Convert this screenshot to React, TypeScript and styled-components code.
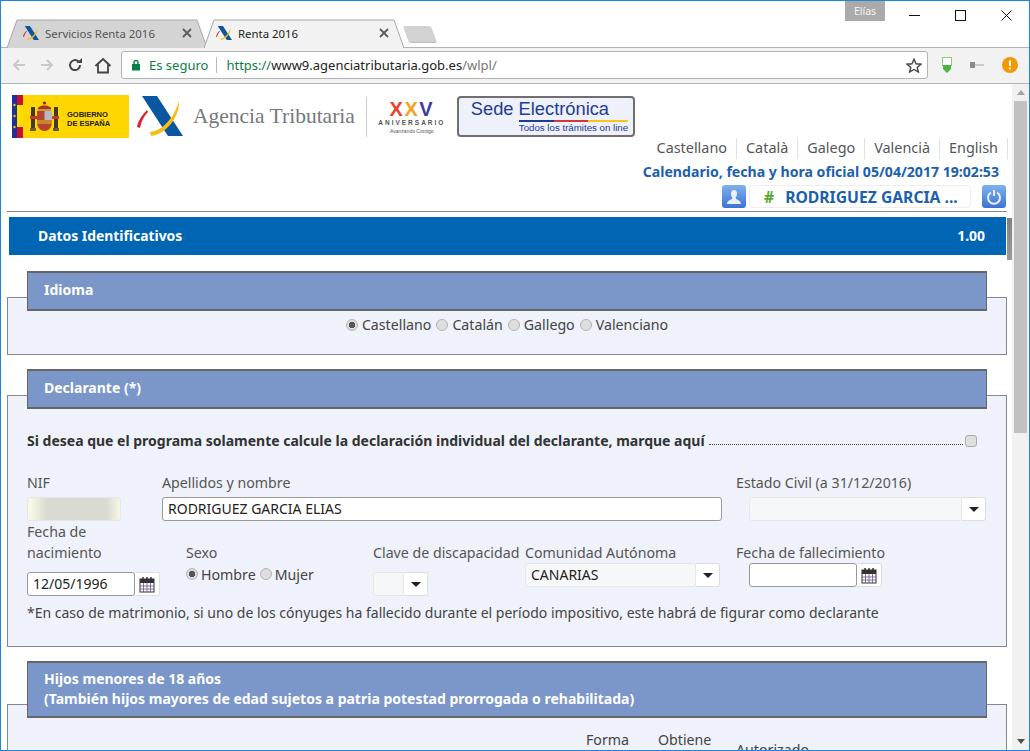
import React from 'react';
import styled, { createGlobalStyle } from 'styled-components';

const GlobalStyle = createGlobalStyle`
  html, body { margin: 0; padding: 0; background: #fff; }
  * { box-sizing: border-box; }
  body { font-family: "Noto Sans", "Open Sans", sans-serif; }
`;

const Win = styled.div`
  width: 1030px;
  height: 751px;
  border: 1px solid #1d87d6;
  display: flex;
  flex-direction: column;
  overflow: hidden;
  background: #fff;
`;

const TitleBar = styled.div`
  height: 47px;
  flex: none;
  display: flex;
  align-items: flex-end;
  padding-left: 6px;
  position: relative;
  border-bottom: 1px solid #b4b4b4;
`;

const Tab = styled.div<{ $active?: boolean }>`
  position: relative;
  width: 200px;
  height: 29px;
  margin-right: -3px;
  margin-bottom: -1px;
  display: flex;
  align-items: center;
  padding: 0 15px 1px ${(p) => (p.$active ? 12 : 16)}px;
  font-size: 11.4px;
  color: ${(p) => (p.$active ? '#222' : '#555')};
  z-index: ${(p) => (p.$active ? 2 : 1)};
  svg.shape { position: absolute; inset: 0; z-index: -1; }
`;

const TabLabel = styled.span`
  flex: 1;
  margin-left: 6px;
  white-space: nowrap;
`;

const NewTab = styled.div`
  width: 28px;
  height: 17px;
  margin: 0 0 4px 5px;
  background: #d2d2d2;
  border-bottom: 1px solid #bdbdbd;
  border-radius: 2px;
  transform: skewX(20deg);
`;

const Profile = styled.div`
  position: absolute;
  top: 0;
  left: 844px;
  width: 40px;
  height: 20px;
  background: #aaa;
  color: #f4f4f4;
  font-size: 10.5px;
  text-align: center;
  line-height: 20px;
`;

const WinControls = styled.div`
  position: absolute;
  top: 0;
  right: 0;
  display: flex;
`;

const WinBtn = styled.div`
  width: 46px;
  height: 29px;
  display: flex;
  align-items: center;
  justify-content: center;
`;

const Toolbar = styled.div`
  height: 36px;
  flex: none;
  background: #f2f2f2;
  border-bottom: 1px solid #b4b4b4;
  display: flex;
  align-items: center;
  padding: 0 0 1px 4px;
`;

const NavBtn = styled.div`
  width: 28px;
  height: 24px;
  display: flex;
  align-items: center;
  justify-content: center;
`;

const Omnibox = styled.div`
  width: 807px;
  height: 28px;
  margin-left: 4px;
  background: #fff;
  border: 1px solid #b4b4b4;
  border-radius: 3px;
  display: flex;
  align-items: center;
  padding: 0 5px 0 9px;
  font-size: 13px;
`;

const Secure = styled.span`
  color: #0b8043;
  margin-left: 8px;
`;

const OmniSep = styled.span`
  width: 1px;
  height: 16px;
  background: #bbb;
  margin: 0 9px 0 8px;
`;

const Url = styled.span`
  flex: 1;
  color: #0b8043;
  b { font-weight: 400; color: #222; }
  i { font-style: normal; color: #777; }
`;

const ExtIcons = styled.div`
  display: flex;
  align-items: center;
  margin-left: 14px;
  gap: 18px;
`;

const Viewport = styled.div`
  flex: 1;
  display: flex;
  min-height: 0;
`;

const Page = styled.div`
  flex: 1;
  min-width: 0;
  overflow: hidden;
  padding: 11px 0 0 6px;
  color: #444;
  font-size: 14.2px;
`;

const Scrollbar = styled.div`
  width: 17px;
  flex: none;
  background: #f1f1f1;
  display: flex;
  flex-direction: column;
  align-items: center;
`;

const ScrollArrow = styled.div<{ $down?: boolean }>`
  height: 17px;
  flex: none;
  display: flex;
  align-items: center;
  justify-content: center;
  &::before {
    content: '';
    border-left: 4px solid transparent;
    border-right: 4px solid transparent;
    ${(p) => (p.$down ? 'border-top: 5px solid #505050;' : 'border-bottom: 5px solid #a3a3a3;')}
  }
`;

const ScrollThumb = styled.div`
  width: 13px;
  height: 332px;
  background: #c1c1c1;
`;

const ScrollRest = styled.div`
  flex: 1;
`;

const LogoRow = styled.div`
  height: 43px;
  display: flex;
  align-items: center;
`;

const GovLogo = styled.div`
  width: 117px;
  height: 43px;
  margin-left: 5px;
  background: #ffd600;
  display: flex;
  align-items: center;
  color: #222;
  font-size: 7.5px;
  line-height: 9px;
  font-weight: 700;
  font-family: "Liberation Sans", sans-serif;
  white-space: nowrap;
`;

const GovText = styled.span`
  margin-left: 8px;
  padding-top: 4px;
`;

const CrestBox = styled.div`
  margin-left: 7px;
  display: flex;
`;

const BrandMark = styled.div`
  margin: 0 10px 0 8px;
  display: flex;
`;

const BrandName = styled.span`
  font-family: "Liberation Serif", serif;
  font-size: 21.5px;
  color: #77787b;
  white-space: nowrap;
`;

const LogoSep = styled.span`
  width: 1px;
  height: 40px;
  background: #ccc;
  margin: 0 10px 0 11px;
`;

const Anniversary = styled.div`
  width: 70px;
  display: flex;
  flex-direction: column;
  align-items: center;
  font-family: "Liberation Sans", sans-serif;
  color: #555;
  line-height: 1;
`;

const Xxv = styled.div`
  font-size: 20px;
  font-weight: 700;
  letter-spacing: 1.5px;
  height: 19px;
  span:nth-child(1) { color: #e8412c; }
  span:nth-child(2) { color: #f4a21d; }
  span:nth-child(3) { color: #3b3f9e; }
`;

const AnnTitle = styled.div`
  font-size: 6.5px;
  font-weight: 700;
  letter-spacing: 2px;
  margin-top: 2px;
  white-space: nowrap;
`;

const AnnSub = styled.div`
  font-size: 5px;
  margin-top: 2px;
  white-space: nowrap;
`;

const SedeBox = styled.div`
  width: 178px;
  height: 41px;
  margin-left: 10px;
  border: 2px solid #6f6f6f;
  border-radius: 4px;
  background: #eef0fa;
  display: flex;
  flex-direction: column;
  padding: 1px 0 0 12px;
  font-family: "Liberation Sans", sans-serif;
  color: #1f3c94;
`;

const SedeTitle = styled.div`
  font-size: 18.3px;
  line-height: 20px;
  white-space: nowrap;
`;

const SedeBar = styled.div`
  width: 109px;
  height: 2px;
  flex: none;
  margin: 1px 0 0 48px;
  background: linear-gradient(90deg, #1f3c94 0 32%, #d8363a 32% 63%, #f7c61d 63%);
`;

const SedeSub = styled.div`
  font-size: 9.7px;
  line-height: 12px;
  margin-left: 48px;
  white-space: nowrap;
`;

const LangRow = styled.div`
  display: flex;
  justify-content: flex-end;
  height: 21px;
  margin-right: 4px;
`;

const LangItem = styled.div`
  padding: 0 9px;
  border-right: 1px solid #e2e2e2;
  color: #555;
  font-size: 14.4px;
  line-height: 20px;
  white-space: nowrap;
`;

const OfficialDate = styled.div`
  text-align: right;
  color: #1c5fad;
  font-weight: 700;
  font-size: 14.1px;
  line-height: 18px;
  margin: 4px 13px 0 0;
  white-space: nowrap;
`;

const UserRow = styled.div`
  display: flex;
  justify-content: flex-end;
  align-items: center;
  height: 23px;
  margin: 4px 6px 0 0;
`;

const SquareBtn = styled.div`
  width: 24px;
  height: 23px;
  border-radius: 3px;
  background: linear-gradient(#7fb2ec, #3d72d6);
  display: flex;
  align-items: center;
  justify-content: center;
`;

const UserBox = styled.div`
  width: 222px;
  height: 23px;
  margin: 0 11px 0 3px;
  border: 1px solid #eee;
  border-radius: 3px;
  display: flex;
  align-items: center;
  color: #1c5fad;
  font-weight: 700;
  font-size: 15.7px;
  padding-left: 14px;
  white-space: nowrap;
`;

const Hash = styled.span`
  color: #5aa82e;
  margin-right: 11px;
`;

const Rule = styled.div`
  height: 1px;
  background: #8a8a8a;
  margin: 3px 5px 0 0;
`;

const BlueBarRow = styled.div`
  display: flex;
  align-items: flex-start;
  height: 40px;
  padding-bottom: 2px;
  margin: 5px 0 0 2px;
`;

const BlueBar = styled.div`
  flex: 1;
  height: 38px;
  background: #0065b3;
  color: #fff;
  font-weight: 700;
  font-size: 13.9px;
  display: flex;
  align-items: center;
  justify-content: space-between;
  padding: 0 21px 2px 29px;
`;

const InnerThumb = styled.div`
  width: 5px;
  height: 42px;
  margin: 1px 0 0 1px;
  background: linear-gradient(#808080, #9a9a9a);
`;

/* la cabecera sobresale por arriba de su panel: el margen depende de su alto */
const Panel = styled.section<{ $height: number; $head: number }>`
  height: ${(p) => p.$height}px;
  margin: ${(p) => p.$head}px 5px 0 0;
  border: 1px solid #85878a;
  background: #eff2fa;
`;

const PanelHead = styled.header<{ $height: number }>`
  height: ${(p) => p.$height}px;
  margin: ${(p) => 13 - p.$height}px 19px 0 19px;
  padding: 0 16px 2px;
  background: #7b96c9;
  border-top: 2px solid #666;
  border-bottom: 2px solid #666;
  border-left: 1px solid #666;
  border-right: 1px solid #666;
  display: flex;
  flex-direction: column;
  justify-content: center;
  color: #fff;
  font-weight: 700;
  font-size: 14px;
  line-height: 20px;
  white-space: nowrap;
`;

const RadioGroup = styled.div<{ $center?: boolean }>`
  display: flex;
  align-items: center;
  gap: 4px;
  ${(p) => p.$center && 'justify-content: center; margin-top: 4px; gap: 5px;'}
  white-space: nowrap;
`;

const Radio = styled.span<{ $checked?: boolean }>`
  width: 12px;
  height: 12px;
  border-radius: 50%;
  margin-right: -1px;
  border: 1px solid #b5b5b5;
  background: ${(p) => (p.$checked ? 'radial-gradient(circle, #555 0 3px, #ddd 3.5px)' : '#dedede')};
`;

const CheckLine = styled.div`
  display: flex;
  align-items: center;
  margin: 22px 29px 0 19px;
  color: #333;
  font-weight: 700;
  font-size: 14px;
  white-space: nowrap;
`;

const Dots = styled.span`
  flex: 1;
  height: 8px;
  margin: 0 2px 0 4px;
  border-bottom: 1px dotted #444;
`;

const Checkbox = styled.span`
  width: 12px;
  height: 12px;
  flex: none;
  border: 1px solid #aaa;
  border-radius: 3px;
  background: #dfdfdf;
`;

const FormRow = styled.div<{ $top: number }>`
  display: flex;
  align-items: flex-start;
  margin: ${(p) => p.$top}px 0 0 19px;
`;

const Field = styled.div<{ $width: number; $top?: number }>`
  width: ${(p) => p.$width}px;
  flex: none;
  padding-top: ${(p) => p.$top ?? 0}px;
`;

const Label = styled.div<{ $gap?: number; $wrap?: boolean }>`
  color: #555;
  font-size: 14.2px;
  line-height: 21px;
  margin-bottom: ${(p) => p.$gap ?? 4}px;
  white-space: ${(p) => (p.$wrap ? 'normal' : 'nowrap')};
  ${(p) => p.$wrap && 'width: 90px;'}
`;

const Input = styled.div<{ $width: number; $tone?: 'plain' | 'nif' | 'off' }>`
  width: ${(p) => p.$width}px;
  height: 24px;
  border: 1px solid ${(p) => (p.$tone && p.$tone !== 'plain' ? '#e4e6e8' : '#999')};
  border-radius: 3px;
  background: ${(p) =>
    p.$tone === 'nif'
      ? 'linear-gradient(90deg, #f8f8e6 0 4%, #d9dad2 20% 85%, #f8f8e6 100%)'
      : p.$tone === 'off'
        ? '#f6f7f8'
        : '#fff'};
  color: #222;
  font-size: 14px;
  line-height: 22px;
  padding-left: 5px;
  white-space: nowrap;
`;

const Combo = styled.div<{ $indent?: number }>`
  display: flex;
  margin-left: ${(p) => p.$indent ?? 0}px;
`;

const SexoRadios = styled(RadioGroup)`
  height: 18px;
  margin-top: -1px;
`;

const AddonBtn = styled.div`
  width: 24px;
  height: 24px;
  flex: none;
  background: #fff;
  border: 1px solid #dedede;
  border-left: 0;
  border-radius: 0 3px 3px 0;
  display: flex;
  align-items: center;
  justify-content: center;
`;

const CaretBtn = styled(AddonBtn)`
  &::before {
    content: '';
    border-left: 5px solid transparent;
    border-right: 5px solid transparent;
    border-top: 5px solid #222;
  }
`;

const CalendarBtn = styled(AddonBtn)`
  width: 25px;
`;

const Note = styled.div`
  margin: 7px 0 0 19px;
  color: #444;
  font-size: 14px;
  line-height: 20px;
  white-space: nowrap;
`;

const ChildColumns = styled.div`
  display: grid;
  grid-template-columns: 72px 78px auto;
  margin: 12px 0 0 578px;
  color: #444;
  line-height: 20px;
  white-space: nowrap;
`;

const LowColumn = styled.span`
  padding-top: 10px;
`;

const AeatLogo = ({ size }: { size: number }) => (
  <svg width={size} height={(size * 41) / 46} viewBox="0 0 46 41">
    <path d="M5 0H20L46 40H31Z" fill="#0a56a0" />
    <path d="M42 5C43 20 30 38 14 40L13 36C26 35 38 20 42 5Z" fill="#f6bd16" />
    <path d="M10 14C5 19 1 25 0 31L3 32C4 26 7 20 11 16Z" fill="#d8262c" />
  </svg>
);

const TabShape = ({ active }: { active?: boolean }) => (
  <svg className="shape" width="200" height="29" viewBox="0 0 200 29">
    <path
      d="M0 29L10 1H190L200 29"
      fill={active ? '#f2f2f2' : '#d4d4d4'}
      stroke="#a8a8a8"
    />
  </svg>
);

const Close = () => (
  <svg width="10" height="10" viewBox="0 0 10 10">
    <path d="M1 1L9 9M9 1L1 9" stroke="#5a5a5a" strokeWidth="1.8" />
  </svg>
);

const CalendarIcon = () => (
  <svg width="16" height="17" viewBox="0 0 16 17">
    <rect x="1" y="3" width="14" height="13" fill="#fff" stroke="#333" />
    <rect x="1" y="3" width="14" height="4" fill="#333" />
    <path d="M4 1V5M8 1V5M12 1V5" stroke="#333" strokeWidth="1.5" />
    <path d="M1 10H15M1 13H15M4.5 7V16M8 7V16M11.5 7V16" stroke="#6a4f8c" strokeWidth="0.8" />
  </svg>
);

const Crest = () => (
  <svg width="29" height="31" viewBox="0 0 29 31">
    <rect x="1" y="6" width="4" height="22" fill="#3d3a2c" />
    <rect x="24" y="6" width="4" height="22" fill="#3d3a2c" />
    <rect x="0" y="27" width="6" height="3" fill="#6b5a2a" />
    <rect x="23" y="27" width="6" height="3" fill="#6b5a2a" />
    <path d="M0 15H7V18H0ZM22 15H29V18H22Z" fill="#c8342a" />
    <path d="M7 10H22V21C22 27 18 30 14.5 30C11 30 7 27 7 21Z" fill="#b5432f" />
    <rect x="14.5" y="10" width="7.5" height="9" fill="#b9b6c8" />
    <rect x="7" y="19" width="15" height="4" fill="#c9862a" />
    <path d="M8 9C6 3 23 3 21 9Z" fill="#a83226" />
    <rect x="8" y="8" width="13" height="2" fill="#c99a2e" />
    <circle cx="14.5" cy="2" r="1.6" fill="#7d2a1f" />
  </svg>
);

const FlagStripes = () => (
  <svg width="11" height="43" viewBox="0 0 11 43">
    <rect width="5" height="43" fill="#1f2f96" />
    <circle cx="2.5" cy="10" r="1.2" fill="#e8c21a" />
    <circle cx="2.5" cy="21" r="1.2" fill="#e8c21a" />
    <circle cx="2.5" cy="32" r="1.2" fill="#e8c21a" />
    <rect x="5" width="6" height="43" fill="#c8102e" />
    <rect x="5" y="10" width="6" height="22" fill="#ffe000" />
  </svg>
);

export default function App() {
  return (
    <>
      <GlobalStyle />
      <Win>
        <TitleBar>
          <Tab>
            <TabShape />
            <AeatLogo size={16} />
            <TabLabel>Servicios Renta 2016</TabLabel>
            <Close />
          </Tab>
          <Tab $active>
            <TabShape active />
            <AeatLogo size={16} />
            <TabLabel>Renta 2016</TabLabel>
            <Close />
          </Tab>
          <NewTab />
          <Profile>Elías</Profile>
          <WinControls>
            <WinBtn>
              <svg width="11" height="11" viewBox="0 0 11 11"><path d="M0 5.5H11" stroke="#111" /></svg>
            </WinBtn>
            <WinBtn>
              <svg width="11" height="11" viewBox="0 0 11 11"><rect x=".5" y=".5" width="10" height="10" fill="none" stroke="#111" /></svg>
            </WinBtn>
            <WinBtn>
              <svg width="11" height="11" viewBox="0 0 11 11"><path d="M.5 .5L10.5 10.5M10.5 .5L.5 10.5" stroke="#111" /></svg>
            </WinBtn>
          </WinControls>
        </TitleBar>
        <Toolbar>
          <NavBtn>
            <svg width="16" height="16" viewBox="0 0 16 16"><path d="M14 8H3M8 3L3 8L8 13" fill="none" stroke="#c8c8c8" strokeWidth="2" /></svg>
          </NavBtn>
          <NavBtn>
            <svg width="16" height="16" viewBox="0 0 16 16"><path d="M2 8H13M8 3L13 8L8 13" fill="none" stroke="#c8c8c8" strokeWidth="2" /></svg>
          </NavBtn>
          <NavBtn>
            <svg width="16" height="16" viewBox="0 0 16 16"><path d="M13 8A5 5 0 1 1 11.5 4.5" fill="none" stroke="#444" strokeWidth="2" /><path d="M9.5 6H15V1Z" fill="#444" /></svg>
          </NavBtn>
          <NavBtn>
            <svg width="18" height="17" viewBox="0 0 18 17"><path d="M1.5 9L9 2L16.5 9M4 7.5V15.5H14V7.5" fill="none" stroke="#444" strokeWidth="1.8" /></svg>
          </NavBtn>
          <Omnibox>
            <svg width="10" height="12" viewBox="0 0 10 12"><rect x="1" y="5" width="8" height="6.5" fill="#0b8043" /><path d="M3 5V3.5A2 2 0 0 1 7 3.5V5" fill="none" stroke="#0b8043" strokeWidth="1.4" /></svg>
            <Secure>Es seguro</Secure>
            <OmniSep />
            <Url>https://<b>www9.agenciatributaria.gob.es</b><i>/wlpl/</i></Url>
            <svg width="16" height="15" viewBox="0 0 16 15"><path d="M8 1.2L10 5.8L15 6.2L11.2 9.4L12.4 14L8 11.5L3.6 14L4.8 9.4L1 6.2L6 5.8Z" fill="none" stroke="#444" strokeWidth="1.4" /></svg>
          </Omnibox>
          <ExtIcons>
            <svg width="10" height="17" viewBox="0 0 10 17"><rect x=".5" y=".5" width="9" height="8" fill="#fff" stroke="#8ec97c" /><path d="M1 8H9V12L5 16L1 12Z" fill="#4cb53f" /></svg>
            <svg width="14" height="6" viewBox="0 0 14 6"><rect width="5" height="6" fill="#8a8a8a" /><path d="M5 3H14" stroke="#a5a5a5" /></svg>
            <svg width="16" height="16" viewBox="0 0 16 16"><circle cx="8" cy="8" r="8" fill="#f29900" /><rect x="7" y="3.5" width="2" height="5.5" fill="#fff" /><rect x="7" y="10.5" width="2" height="2" fill="#fff" /></svg>
          </ExtIcons>
        </Toolbar>
        <Viewport>
          <Page>
            <LogoRow>
              <GovLogo>
                <FlagStripes />
                <CrestBox><Crest /></CrestBox>
                <GovText>GOBIERNO<br />DE ESPAÑA</GovText>
              </GovLogo>
              <BrandMark><AeatLogo size={46} /></BrandMark>
              <BrandName>Agencia Tributaria</BrandName>
              <LogoSep />
              <Anniversary>
                <Xxv><span>X</span><span>X</span><span>V</span></Xxv>
                <AnnTitle>ANIVERSARIO</AnnTitle>
                <AnnSub>Avanzando Contigo</AnnSub>
              </Anniversary>
              <SedeBox>
                <SedeTitle>Sede Electrónica</SedeTitle>
                <SedeBar />
                <SedeSub>Todos los trámites on line</SedeSub>
              </SedeBox>
            </LogoRow>
            <LangRow>
              <LangItem>Castellano</LangItem>
              <LangItem>Català</LangItem>
              <LangItem>Galego</LangItem>
              <LangItem>Valencià</LangItem>
              <LangItem>English</LangItem>
            </LangRow>
            <OfficialDate>Calendario, fecha y hora oficial 05/04/2017 19:02:53</OfficialDate>
            <UserRow>
              <SquareBtn>
                <svg width="16" height="16" viewBox="0 0 16 16"><path d="M8 1C10.5 1 11 3 11 5C11 7 10 8 9.5 9C10 11 15 11 15 15H1C1 11 6 11 6.5 9C6 8 5 7 5 5C5 3 5.5 1 8 1Z" fill="#e8f0fb" /></svg>
              </SquareBtn>
              <UserBox><Hash>#</Hash>RODRIGUEZ GARCIA ...</UserBox>
              <SquareBtn>
                <svg width="16" height="16" viewBox="0 0 16 16"><path d="M5 3.5A6 6 0 1 0 11 3.5" fill="none" stroke="#e8f0fb" strokeWidth="2" /><path d="M8 1V7" stroke="#e8f0fb" strokeWidth="2" /></svg>
              </SquareBtn>
            </UserRow>
            <Rule />
            <BlueBarRow>
              <BlueBar><span>Datos Identificativos</span><span>1.00</span></BlueBar>
              <InnerThumb />
            </BlueBarRow>
            <Panel $height={58} $head={40}>
              <PanelHead $height={40}>Idioma</PanelHead>
              <RadioGroup $center>
                <Radio $checked /> Castellano
                <Radio /> Catalán
                <Radio /> Gallego
                <Radio /> Valenciano
              </RadioGroup>
            </Panel>
            <Panel $height={252} $head={40}>
              <PanelHead $height={40}>Declarante (*)</PanelHead>
              <CheckLine>
                Si desea que el programa solamente calcule la declaración individual del declarante, marque aquí
                <Dots />
                <Checkbox />
              </CheckLine>
              <FormRow $top={22}>
                <Field $width={135}>
                  <Label>NIF</Label>
                  <Input $width={94} $tone="nif" />
                </Field>
                <Field $width={574}>
                  <Label>Apellidos y nombre</Label>
                  <Input $width={560}>RODRIGUEZ GARCIA ELIAS</Input>
                </Field>
                <Field $width={250}>
                  <Label>Estado Civil (a 31/12/2016)</Label>
                  <Combo $indent={13}>
                    <Input $width={213} $tone="off" />
                    <CaretBtn />
                  </Combo>
                </Field>
              </FormRow>
              <FormRow $top={0}>
                <Field $width={159}>
                  <Label $wrap $gap={9}>Fecha de nacimiento</Label>
                  <Combo>
                    <Input $width={108}>12/05/1996</Input>
                    <CalendarBtn><CalendarIcon /></CalendarBtn>
                  </Combo>
                </Field>
                <Field $width={187} $top={21}>
                  <Label $gap={3}>Sexo</Label>
                  <SexoRadios>
                    <Radio $checked /> Hombre
                    <Radio /> Mujer
                  </SexoRadios>
                </Field>
                <Field $width={152} $top={21}>
                  <Label $gap={9}>Clave de discapacidad</Label>
                  <Combo>
                    <Input $width={31} $tone="off" />
                    <CaretBtn />
                  </Combo>
                </Field>
                <Field $width={211} $top={21}>
                  <Label $gap={0}>Comunidad Autónoma</Label>
                  <Combo>
                    <Input $width={171} $tone="off">CANARIAS</Input>
                    <CaretBtn />
                  </Combo>
                </Field>
                <Field $width={200} $top={21}>
                  <Label $gap={0}>Fecha de fallecimiento</Label>
                  <Combo $indent={13}>
                    <Input $width={108} />
                    <CalendarBtn><CalendarIcon /></CalendarBtn>
                  </Combo>
                </Field>
              </FormRow>
              <Note>*En caso de matrimonio, si uno de los cónyuges ha fallecido durante el período impositivo, este habrá de figurar como declarante</Note>
            </Panel>
            <Panel $height={100} $head={57}>
              <PanelHead $height={57}>
                <span>Hijos menores de 18 años</span>
                <span>(También hijos mayores de edad sujetos a patria potestad prorrogada o rehabilitada)</span>
              </PanelHead>
              <ChildColumns>
                <span>Forma</span>
                <span>Obtiene</span>
                <LowColumn>Autorizado</LowColumn>
              </ChildColumns>
            </Panel>
          </Page>
          <Scrollbar>
            <ScrollArrow />
            <ScrollThumb />
            <ScrollRest />
            <ScrollArrow $down />
          </Scrollbar>
        </Viewport>
      </Win>
    </>
  );
}
